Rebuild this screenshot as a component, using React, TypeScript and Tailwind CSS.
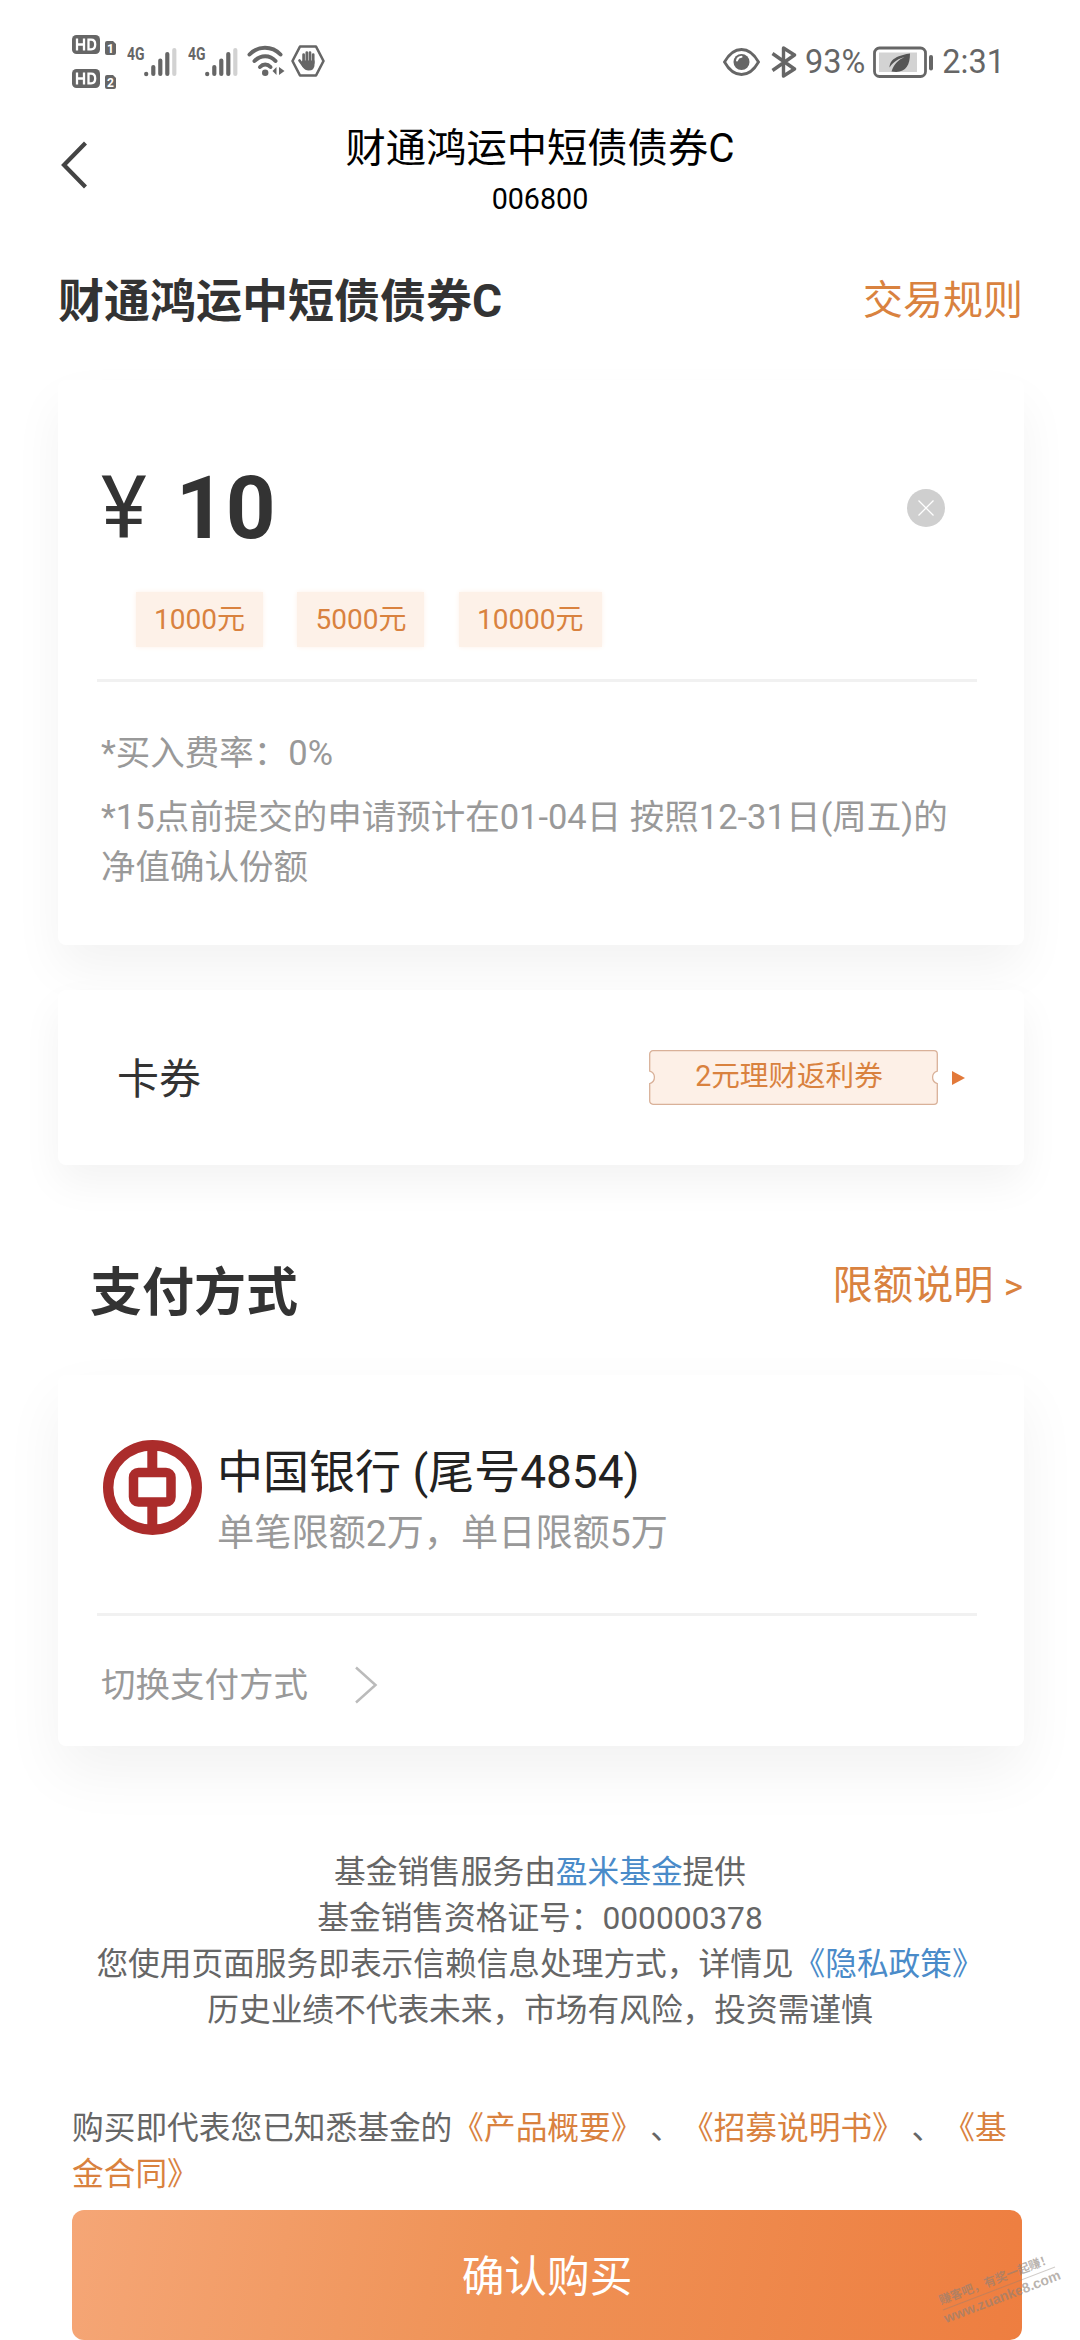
import React from 'react';

const QUICK_AMOUNTS = ['1000元', '5000元', '10000元'];

function HdBadge({ sim }: { sim: string }): React.ReactElement {
  return (
    <div className="flex h-[19px] items-end gap-[5px]">
      <svg width="28" height="19" viewBox="0 0 28 19">
        <rect width="28" height="19" rx="4.5" fill="#666" />
        <path d="M5 3.5v12M12 3.5v12M5 9.5h7M16.5 4.7v9.6h2.6c2.8 0 4.1-1.7 4.1-4.8s-1.3-4.8-4.1-4.8z" fill="none" stroke="#fff" strokeWidth="2.3" />
      </svg>
      <svg width="11" height="14" viewBox="0 0 11 14" className="-mb-px">
        <path d="M0 2a2 2 0 0 1 2-2h6l3 3v9a2 2 0 0 1-2 2H2a2 2 0 0 1-2-2z" fill="#666" />
        <text x="5.4" y="11.7" textAnchor="middle" fontSize="12" fontWeight="700" fontFamily="Roboto, sans-serif" fill="#fff">
          {sim}
        </text>
      </svg>
    </div>
  );
}

function Signal(): React.ReactElement {
  return (
    <svg width="50" height="32" viewBox="0 0 50 32">
      <text x="0" y="14.5" fontSize="18.5" fontWeight="700" textLength="17.5" lengthAdjust="spacingAndGlyphs" fontFamily="Roboto, sans-serif" fill="#666">
        4G
      </text>
      <g strokeWidth="4.2" strokeLinecap="round" stroke="#666">
        <path d="M19.2 28.8v.4M26.3 22v7M33.3 15.5V29M40.3 9V29" />
        <path d="M47.3 5V29" stroke="#d2d2d2" />
      </g>
    </svg>
  );
}

function StatusBar(): React.ReactElement {
  return (
    <div className="flex h-[100px] shrink-0 items-start text-[#666]">
      <div className="mt-[35px] ml-[72px] flex flex-col gap-[15px]">
        <HdBadge sim="1" />
        <HdBadge sim="2" />
      </div>
      <div className="mt-[45px] ml-[11px] flex">
        <Signal />
        <div className="ml-[11px]">
          <Signal />
        </div>
        <svg className="ml-[9px]" width="38" height="32" viewBox="0 0 38 32" fill="none" stroke="#666" strokeWidth="4" strokeLinecap="round">
          <path d="M2.5 9.5C11 .5 25 .5 33.5 9.500" />
          <path d="M7.5 16C13.5 9.5 23 9.5 28.500 16" />
          <path d="M13 22c3-3.2 7.5-3.2 10.5 0" />
          <circle cx="18.2" cy="27.7" r="3.2" fill="#666" stroke="none" />
          <path d="M25.5 26.5l4-4v8zM37.5 26.5l-5.5-4v8z" transform="translate(0 -.5)" fill="#666" stroke="none" />
        </svg>
        <svg className="ml-[6px]" width="34" height="32" viewBox="0 0 34 32">
          <path d="M9 1.5h16L32.5 16 25 30.5H9L1.5 16z" fill="none" stroke="#666" strokeWidth="2.600" strokeLinejoin="round" />
          <g stroke="#666" strokeWidth="2.7" strokeLinecap="round">
            <path d="M12.6 18V9.5M15.8 16V7.5M19 16V7.5M22.2 18v-8.5M8.5 15.5l4 5.5" />
          </g>
          <path d="M11.3 15.5h12.2v4.5q0 5.5-6 5.500-3.5 0-5.5-3l-2-3.500z" fill="#666" />
        </svg>
      </div>
      <div className="mt-[45px] mr-[75px] ml-auto flex items-center">
        <svg width="37" height="32" viewBox="0 0 37 32">
          <path d="M1.5 16C6 8 11.5 3.5 18.5 3.5S31 8 35.5 16C31 24 25.5 28.5 18.5 28.5S6 24 1.5 16z" fill="none" stroke="#666" strokeWidth="2.8" />
          <circle cx="18.5" cy="16" r="8" fill="#666" />
          <path d="M14 14.5a5 5 0 0 1 4.5-3.7" fill="none" stroke="#fff" strokeWidth="2" strokeLinecap="round" />
        </svg>
        <svg className="ml-[11px]" width="26" height="32" viewBox="0 0 26 32" fill="none" stroke="#666" strokeWidth="3.4">
          <path d="M1.5 7.5L23.5 23 12.5 30V2L23.5 9 1.5 24.5" strokeLinejoin="round" />
        </svg>
        <span className="ml-[8px] text-[32.5px] leading-[34px]">93%</span>
        <svg className="ml-[8px]" width="61" height="32" viewBox="0 0 61 32">
          <rect x="1.5" y="2" width="51" height="28.5" rx="5" fill="none" stroke="#666" strokeWidth="2.8" />
          <rect x="6" y="6.5" width="38" height="19.5" fill="#d3d3d3" />
          <path d="M37 7.5c-9 1.5-20 4-20.5 14 5-7 9-8.5 15-10.5-6 3-10 6-13 14.5C32 28 37 20 37 7.5z" fill="#555" />
          <path d="M58 11v11.5" stroke="#666" strokeWidth="4" strokeLinecap="round" />
        </svg>
        <span className="ml-[8px] text-[32.5px] leading-[34px]">2:31</span>
      </div>
    </div>
  );
}

function Header(): React.ReactElement {
  return (
    <header className="flex h-[130px] shrink-0 items-start justify-between px-[59px] text-black">
      <svg className="mt-[40px]" width="30" height="50" viewBox="0 0 30 50" fill="none" stroke="#444" strokeWidth="4.2">
        <path d="M26.5 3L5 25l21.5 22" />
      </svg>
      <div className="mt-[24px] flex flex-col items-center">
        <h1 className="text-[40.3px] leading-[50px]">财通鸿运中短债债券C</h1>
        <p className="text-[28.7px] leading-[50px]">006800</p>
      </div>
      <div className="w-[30px]" />
    </header>
  );
}

function Ticket({ label }: { label: string }): React.ReactElement {
  return (
    <div className="relative flex h-[55px] w-[289px] justify-center">
      <svg className="absolute inset-0" width="289" height="55" viewBox="0 0 289 55">
        <path
          d="M4 .7h281a3.3 3.3 0 0 1 3.3 3.3v17a6.5 6.5 0 0 0 0 12.5V51a3.3 3.3 0 0 1-3.3 3.3H4A3.3 3.3 0 0 1 .7 51V33.5a6.5 6.5 0 0 0 0-12.5V4A3.3 3.3 0 0 1 4 .7z"
          fill="#fdf0e7"
          stroke="#d9b199"
          strokeWidth="1.3"
        />
      </svg>
      <span className="relative -ml-[9px] text-[28.6px] leading-[53px] text-[#d9823f]">{label}</span>
    </div>
  );
}

function BankLogo(): React.ReactElement {
  return (
    <svg width="99" height="95" viewBox="0 0 99 95" fill="none" stroke="#ab2c2b">
      <ellipse cx="49.5" cy="47.5" rx="44.3" ry="42.3" strokeWidth="10.4" />
      <rect x="30.5" y="32.5" width="37.5" height="29.5" rx="5" strokeWidth="9.5" />
      <path d="M49.3 6v25M49.3 64v25" strokeWidth="10" />
    </svg>
  );
}

function Watermark(): React.ReactElement {
  return (
    <div className="absolute right-[19px] bottom-[34px] flex w-[124px] -rotate-[21deg] flex-col items-center font-bold whitespace-nowrap text-[#8a8078]/60">
      <div className="border-b border-[#8a8078]/40 text-[12px] leading-[17px]">赚客吧，有奖一起赚！</div>
      <div className="font-['Liberation_Sans',sans-serif] text-[14px] leading-[17px]">www.zuanke8.com</div>
    </div>
  );
}

export default function App(): React.ReactElement {
  return (
    <div className="relative flex h-[2340px] w-[1080px] flex-col overflow-hidden bg-white font-[Roboto,'Noto_Sans_CJK_SC',sans-serif] text-[#333] [text-spacing-trim:space-all]">
      <StatusBar />
      <Header />

      <div className="flex h-[142px] shrink-0 items-center justify-between pr-[57px] pl-[58px]">
        <h2 className="text-[46px] leading-[60px] font-bold">财通鸿运中短债债券C</h2>
        <a className="text-[40px] leading-[60px] text-[#d9823f]">交易规则</a>
      </div>

      <section className="mr-[56px] ml-[58px] mt-[8px] h-[565px] shrink-0 rounded-lg bg-white pr-[47px] pl-[39px] pt-[68px] shadow-[0_24px_50px_rgba(0,0,0,0.05)]">
        <div className="flex h-[120px] items-center pl-[4px] text-[87px] leading-[120px]">
          <span>¥</span>
          <span className="ml-[29px] font-bold">10</span>
          <svg className="mr-[32px] ml-auto" width="38" height="38" viewBox="0 0 38 38">
            <circle cx="19" cy="19" r="19" fill="#cfcfcf" />
            <path d="M11.5 11.5l15 15M26.5 11.5l-15 15" stroke="#fff" strokeWidth="1.3" />
          </svg>
        </div>
        <div className="mt-[24px] flex gap-[34.5px] pl-[39px]">
          {QUICK_AMOUNTS.map((amount) => (
            <button key={amount} type="button" className="h-[55px] bg-[#fdf1e8] px-[18px] text-[28px] leading-[55px] text-[#d9823f] shadow-[0_0_5px_#fdf1e8]">
              {amount}
            </button>
          ))}
        </div>
        <hr className="mt-[32px] h-[3px] border-0 bg-[#f1f1f1]" />
        <div className="mt-[46px] pl-[4px] text-[34.5px] leading-[50px] whitespace-nowrap text-[#999]">
          <p>*买入费率：0%</p>
          <p className="mt-[14px]">
            *15点前提交的申请预计在01-04日 按照12-31日(周五)的
            <br />
            净值确认份额
          </p>
        </div>
      </section>

      <section className="mr-[56px] ml-[58px] mt-[45px] flex h-[175px] shrink-0 items-center rounded-lg bg-white pr-[59px] pl-[59px] shadow-[0_18px_40px_rgba(0,0,0,0.05)]">
        <span className="mt-[4px] text-[42px] leading-[60px]">卡券</span>
        <div className="ml-auto flex items-center gap-[14px]">
          <Ticket label="2元理财返利券" />
          <svg width="13" height="14" viewBox="0 0 13 14">
            <path d="M0 0l13 7-13 7z" fill="#e2793a" />
          </svg>
        </div>
      </section>

      <div className="mt-[67px] flex h-[120px] shrink-0 items-center justify-between pr-[57px] pl-[90px]">
        <h2 className="mt-[4px] text-[52px] leading-[70px] font-bold">支付方式</h2>
        <a className="-mt-[11px] text-[40.3px] leading-[60px] text-[#d9823f]">
          限额说明 <span className="text-[37px]">&gt;</span>
        </a>
      </div>

      <section className="mr-[56px] ml-[58px] mt-[23px] h-[371px] shrink-0 rounded-lg bg-white pr-[47px] pl-[39px] pt-[65px] shadow-[0_26px_60px_rgba(0,0,0,0.055)]">
        <div className="flex h-[173px] items-start pl-[6px]">
          <BankLogo />
          <div className="mt-[2px] ml-[15px] whitespace-nowrap">
            <p className="text-[46px] leading-[60px] text-[#222]">中国银行 (尾号4854)</p>
            <p className="mt-[3px] text-[37.2px] leading-[56px] text-[#999]">单笔限额2万，单日限额5万</p>
          </div>
        </div>
        <hr className="h-[3px] border-0 bg-[#f1f1f1]" />
        <div className="mt-[39px] flex h-[60px] items-center pl-[4px]">
          <span className="text-[34.5px] leading-[60px] text-[#999]">切换支付方式</span>
          <svg className="ml-[46px]" width="24" height="38" viewBox="0 0 24 38" fill="none" stroke="#bbb" strokeWidth="2.5">
            <path d="M2 1.5L21.5 19 2 36.5" />
          </svg>
        </div>
      </section>

      <footer className="mt-[104px] shrink-0 text-center text-[31.7px] leading-[46px] whitespace-nowrap text-[#666]">
        <p>
          基金销售服务由<a className="text-[#4a8bc9]">盈米基金</a>提供
        </p>
        <p>基金销售资格证号：000000378</p>
        <p>
          您使用页面服务即表示信赖信息处理方式，详情见<a className="text-[#4a8bc9]">《隐私政策》</a>
        </p>
        <p>历史业绩不代表未来，市场有风险，投资需谨慎</p>
      </footer>

      <p className="mt-[72px] ml-[72px] shrink-0 text-[31.7px] leading-[46px] whitespace-nowrap text-[#666]">
        购买即代表您已知悉基金的<a className="text-[#d9823f]">《产品概要》</a> 、<a className="text-[#d9823f]">《招募说明书》</a> 、
        <a className="text-[#d9823f]">
          《基
          <br />
          金合同》
        </a>
      </p>

      <button
        type="button"
        className="mt-[12px] mr-[58px] ml-[72px] h-[130px] shrink-0 rounded-xl bg-linear-[100deg,#f5a676,#ef9256_45%,#ee7e40] text-[42.7px] leading-[134px] text-white"
      >
        确认购买
      </button>

      <Watermark />
    </div>
  );
}
